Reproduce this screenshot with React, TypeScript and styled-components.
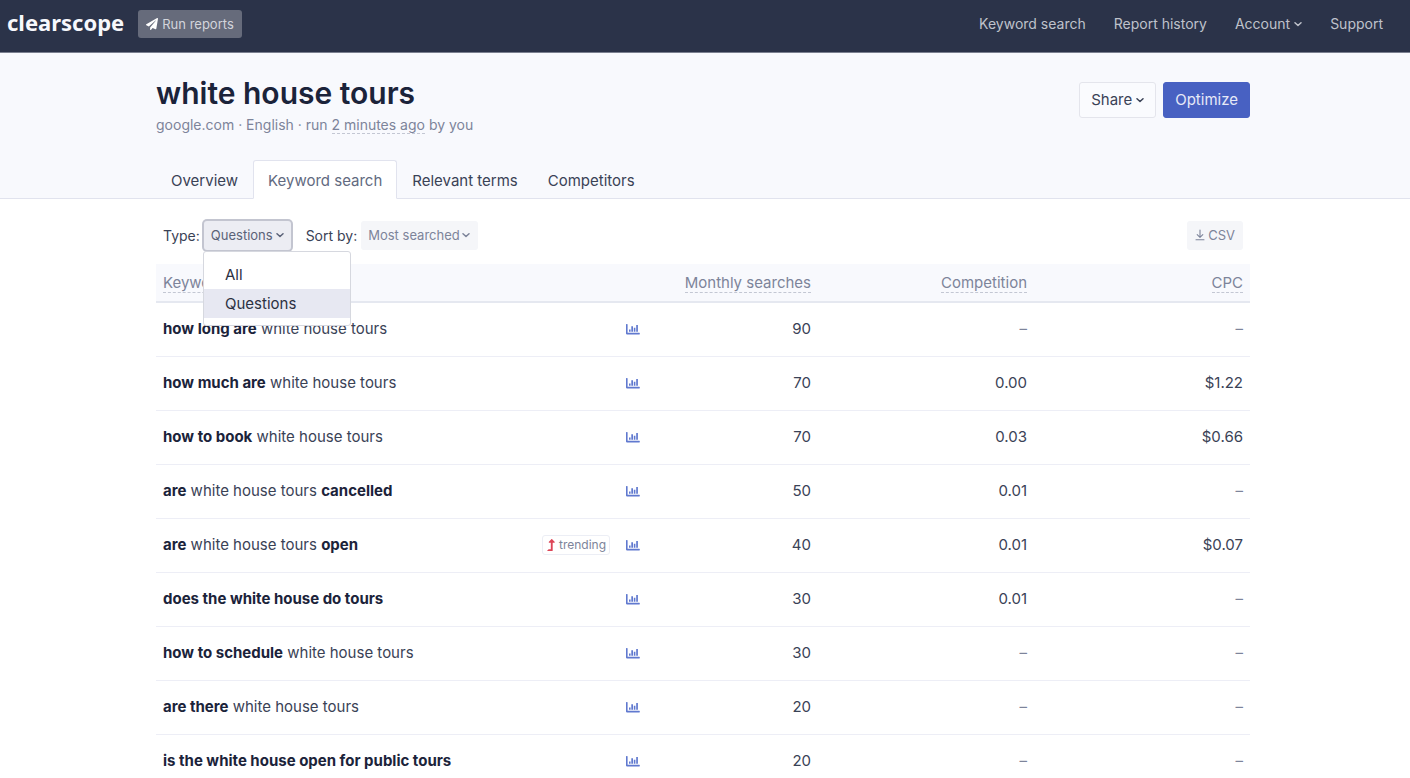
import React from "react";
import styled, { createGlobalStyle, css } from "styled-components";
import { FaLevelUpAlt, FaPaperPlane } from "react-icons/fa";

const GlobalStyle = createGlobalStyle`
  *, *::before, *::after { box-sizing: border-box; }
  body {
    margin: 0;
    background: #fff;
    color: #3a4256;
    font-family: Inter, "Liberation Sans", sans-serif;
    font-size: 15px;
    line-height: 24px;
  }
  button, select { font: inherit; cursor: pointer; }
`;

const TopBar = styled.header`
  display: flex;
  align-items: center;
  justify-content: space-between;
  height: 53px;
  padding: 0 27px 4px 7px;
  background: #2b3349;
  border-bottom: 1px solid #7b8090;
`;

const Brand = styled.div`
  display: flex;
  align-items: center;
  gap: 14px;
`;

const Logo = styled.a`
  padding-bottom: 4px;
  color: #f7f8fc;
  font-family: "Noto Sans", "Open Sans", sans-serif;
  font-size: 22px;
  font-weight: 700;
  line-height: 28px;
  text-decoration: none;
`;

const RunButton = styled.button`
  display: flex;
  align-items: center;
  gap: 4px;
  height: 28px;
  padding: 0 8px;
  border: 0;
  border-radius: 3px;
  background: #666b7b;
  color: #d3d5dc;
  font-size: 13px;

  svg { color: #fff; }
`;

const Nav = styled.nav`
  display: flex;
  gap: 28px;
`;

const navItem = css`
  display: flex;
  align-items: center;
  gap: 4px;
  padding: 0;
  border: 0;
  background: none;
  color: #bfc2cb;
  font-size: 14px;
  line-height: 24px;
  text-decoration: none;
`;

const NavLink = styled.a`${navItem}`;
const NavButton = styled.button`${navItem}`;

const Shell = styled.div`
  padding: 0 20px 0 16px;
`;

const Container = styled.div`
  max-width: 1094px;
  margin: 0 auto;
`;

const Hero = styled.section`
  padding-top: 22px;
  background: #f8f9fd;
  border-bottom: 1px solid #e1e3ee;
`;

const HeroRow = styled.div`
  display: flex;
  align-items: flex-start;
  justify-content: space-between;
`;

const Title = styled.h1`
  margin: 0;
  color: #1b233a;
  font-size: 30px;
  font-weight: 600;
  line-height: 36px;
`;

const Meta = styled.p`
  margin: 4px 0 0;
  color: #7d849a;
  font-size: 14px;
  line-height: 20px;
`;

const Hint = styled.span`
  border-bottom: 1px dashed #c3c7d3;
`;

const Actions = styled.div`
  display: flex;
  gap: 7px;
  padding-top: 7px;
`;

const ActionButton = styled.button<{ $primary?: boolean }>`
  display: flex;
  align-items: center;
  gap: 4px;
  height: 36px;
  padding: 0 11px;
  border: 1px solid ${(p) => (p.$primary ? "#4861c2" : "#e4e5ec")};
  border-radius: 3px;
  background: ${(p) => (p.$primary ? "#4861c2" : "#fafbfe")};
  color: ${(p) => (p.$primary ? "#e6e9f7" : "#3a4256")};
`;

const Tabs = styled.nav`
  display: flex;
  margin: 25px 0 -1px;
`;

const Tab = styled.a<{ $active?: boolean }>`
  height: 39px;
  padding: 8px 14px 0;
  border: 1px solid ${(p) => (p.$active ? "#e1e3ee" : "transparent")};
  border-bottom-color: ${(p) => (p.$active ? "#fff" : "transparent")};
  border-radius: 3px 3px 0 0;
  background: ${(p) => (p.$active ? "#fff" : "transparent")};
  color: ${(p) => (p.$active ? "#626a80" : "#3a4256")};
  text-decoration: none;
`;

const Toolbar = styled.div`
  display: flex;
  align-items: center;
  height: 65px;
  padding: 8px 7px 0;
`;

const Field = styled.div`
  position: relative;
  display: flex;
  align-items: center;
  gap: 4px;
  margin-right: 15px;
`;

const FieldLabel = styled.label`
  font-size: 14px;
`;

const chip = css`
  height: 29px;
  padding: 0 8px 2px;
  border: 0;
  border-radius: 3px;
  background: #f5f6f9;
  color: #7d849a;
  font-size: 13px;
`;

const TypeButton = styled.button`
  ${chip}
  display: flex;
  align-items: center;
  gap: 3px;
  padding: 0 7px 2px;
  background: #ecedf3;
  color: #5a6278;
  box-shadow: 0 0 0 2px #c3c5d0;
`;

const SelectWrap = styled.span`
  display: grid;
  align-items: center;
  justify-items: end;

  > * { grid-area: 1 / 1; }
  > svg { margin: 0 8px 2px 0; color: #7d849a; pointer-events: none; }
`;

const SortSelect = styled.select`
  ${chip}
  appearance: none;
  padding: 0 18px 2px 7px;
`;

const CsvButton = styled.button`
  ${chip}
  display: flex;
  align-items: center;
  gap: 3px;
  margin-left: auto;
`;

const Menu = styled.ul`
  position: absolute;
  top: 30px;
  left: 40px;
  z-index: 1;
  width: 148px;
  margin: 0;
  padding: 8px 0 7px;
  border: 1px solid #d6d8df;
  border-radius: 3px;
  background: #fff;
  list-style: none;
`;

const MenuItem = styled.li<{ $selected?: boolean }>`
  padding: 3px 21px 2px;
  background: ${(p) => (p.$selected ? "#e7e8f2" : "#fff")};
  color: #2c3142;
`;

const Table = styled.table`
  width: 100%;
  table-layout: fixed;
  border-collapse: collapse;
`;

const HeadCell = styled.th<{ $width?: number }>`
  width: ${(p) => (p.$width ? `${p.$width}px` : "auto")};
  height: 38px;
  padding: 0 7px;
  border-bottom: 2px solid #e5e8f0;
  background: #f8f9fd;
  color: #7d849a;
  font-weight: 400;
  text-align: right;

  &:first-child { text-align: left; }
`;

const Row = styled.tr`
  border-bottom: 1px solid #edeef6;
`;

const KeywordCell = styled.td`
  height: 54px;
  padding: 0 7px;
`;

const KeywordLine = styled.div`
  display: flex;
  align-items: center;
`;

const Phrase = styled.span`
  flex: 1;
  b { color: #1b233a; font-weight: 700; }
`;

const Trending = styled.span`
  display: flex;
  align-items: center;
  gap: 2px;
  margin-right: 16px;
  padding: 0 3px 0 2px;
  border: 1px solid #eceef5;
  border-radius: 3px;
  color: #7d849a;
  font-size: 12px;
  line-height: 18px;

  svg { color: #dd4557; }
`;

const ChartLink = styled.a`
  display: flex;
  color: #6079cf;
`;

const NumberCell = styled.td<{ $empty?: boolean }>`
  padding: 0 7px;
  color: ${(p) => (p.$empty ? "#7d849a" : "#3a4256")};
  text-align: right;
`;

const Chevron = () => (
  <svg width="8" height="8" viewBox="0 0 8 8" fill="none" stroke="currentColor" strokeWidth="1.5" strokeLinecap="round" strokeLinejoin="round" aria-hidden="true">
    <path d="M1 2.7 4 5.5 7 2.7" />
  </svg>
);

const Download = () => (
  <svg width="10" height="12" viewBox="0 0 10 12" fill="none" stroke="currentColor" strokeWidth="1.1" strokeLinecap="round" strokeLinejoin="round" aria-hidden="true">
    <path d="M5 1v7M2.2 5.6 5 8.3l2.8-2.7M1 10.8h8" />
  </svg>
);

const ChartIcon = () => (
  <svg width="14" height="12" viewBox="0 0 14 12" fill="currentColor" aria-hidden="true">
    <path d="M.4 1h.8q.4 0 .4.4v8.4h11.8q.4 0 .4.4v.8q0 .4-.4.4H.8Q0 11.400 0 10.600V1.400Q0 1 .4 1z" />
    <path d="M3 6.600h1.600v2.200H3zM5.300 3.200h1.700v5.600H5.300zM7.800 4.800h1.600v4H7.800zM10.200 2h1.700v6.800h-1.700z" />
  </svg>
);

type Keyword = {
  phrase: React.ReactNode;
  searches: string;
  competition: string;
  cpc: string;
  trending?: boolean;
};

const keywords: Keyword[] = [
  { phrase: <><b>how long are</b> white house tours</>, searches: "90", competition: "–", cpc: "–" },
  { phrase: <><b>how much are</b> white house tours</>, searches: "70", competition: "0.00", cpc: "$1.22" },
  { phrase: <><b>how to book</b> white house tours</>, searches: "70", competition: "0.03", cpc: "$0.66" },
  { phrase: <><b>are</b> white house tours <b>cancelled</b></>, searches: "50", competition: "0.01", cpc: "–" },
  { phrase: <><b>are</b> white house tours <b>open</b></>, searches: "40", competition: "0.01", cpc: "$0.07", trending: true },
  { phrase: <b>does the white house do tours</b>, searches: "30", competition: "0.01", cpc: "–" },
  { phrase: <><b>how to schedule</b> white house tours</>, searches: "30", competition: "–", cpc: "–" },
  { phrase: <><b>are there</b> white house tours</>, searches: "20", competition: "–", cpc: "–" },
  { phrase: <b>is the white house open for public tours</b>, searches: "20", competition: "–", cpc: "–" },
];

export default function App() {
  return (
    <>
      <GlobalStyle />
      <TopBar>
        <Brand>
          <Logo href="#">clearscope</Logo>
          <RunButton><FaPaperPlane size={12} aria-hidden="true" />Run reports</RunButton>
        </Brand>
        <Nav>
          <NavLink href="#">Keyword search</NavLink>
          <NavLink href="#">Report history</NavLink>
          <NavButton aria-haspopup="menu">Account<Chevron /></NavButton>
          <NavLink href="#">Support</NavLink>
        </Nav>
      </TopBar>

      <Hero>
        <Shell>
          <Container>
            <HeroRow>
              <div>
                <Title>white house tours</Title>
                <Meta>google.com · English · run <Hint>2 minutes ago</Hint> by you</Meta>
              </div>
              <Actions>
                <ActionButton aria-haspopup="menu">Share<Chevron /></ActionButton>
                <ActionButton $primary>Optimize</ActionButton>
              </Actions>
            </HeroRow>
            <Tabs>
              <Tab href="#">Overview</Tab>
              <Tab href="#" $active aria-current="page">Keyword search</Tab>
              <Tab href="#">Relevant terms</Tab>
              <Tab href="#">Competitors</Tab>
            </Tabs>
          </Container>
        </Shell>
      </Hero>

      <Shell as="main">
        <Container>
          <Toolbar>
            <Field>
              <FieldLabel htmlFor="type">Type:</FieldLabel>
              <TypeButton id="type" aria-haspopup="listbox" aria-expanded="true">Questions<Chevron /></TypeButton>
              <Menu role="listbox" aria-label="Type">
                <MenuItem role="option" aria-selected="false">All</MenuItem>
                <MenuItem role="option" aria-selected="true" $selected>Questions</MenuItem>
              </Menu>
            </Field>
            <Field>
              <FieldLabel htmlFor="sort">Sort by:</FieldLabel>
              <SelectWrap>
                <SortSelect id="sort" defaultValue="searched">
                  <option value="searched">Most searched</option>
                </SortSelect>
                <Chevron />
              </SelectWrap>
            </Field>
            <CsvButton><Download />CSV</CsvButton>
          </Toolbar>

          <Table>
            <thead>
              <tr>
                <HeadCell scope="col"><Hint>Keyword</Hint></HeadCell>
                <HeadCell scope="col" $width={171}><Hint>Monthly searches</Hint></HeadCell>
                <HeadCell scope="col" $width={216}><Hint>Competition</Hint></HeadCell>
                <HeadCell scope="col" $width={216}><Hint>CPC</Hint></HeadCell>
              </tr>
            </thead>
            <tbody>
              {keywords.map((k, i) => (
                <Row key={i}>
                  <KeywordCell>
                    <KeywordLine>
                      <Phrase>{k.phrase}</Phrase>
                      {k.trending && <Trending><FaLevelUpAlt size={12} aria-hidden="true" />trending</Trending>}
                      <ChartLink href="#" aria-label="Search trend"><ChartIcon /></ChartLink>
                    </KeywordLine>
                  </KeywordCell>
                  <NumberCell>{k.searches}</NumberCell>
                  <NumberCell $empty={k.competition === "–"}>{k.competition}</NumberCell>
                  <NumberCell $empty={k.cpc === "–"}>{k.cpc}</NumberCell>
                </Row>
              ))}
            </tbody>
          </Table>
        </Container>
      </Shell>
    </>
  );
}
